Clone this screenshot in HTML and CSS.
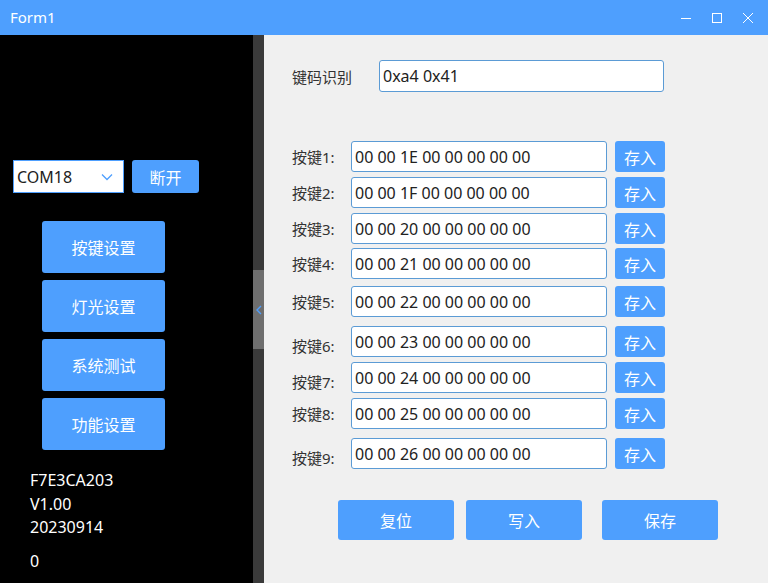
FILE: index.html
```html
<!DOCTYPE html>
<html lang="zh">
<head>
    <meta charset="UTF-8">
    <title>Form1</title>
    <link rel="stylesheet" href="styles.css">
</head>
<body>

<div class="window">
    <!-- 标题栏 -->
    <div class="titlebar">
        <span class="title">Form1</span>
        <div class="win-btns">
            <svg width="12" height="12" viewBox="0 0 12 12"><path d="M1 6.5h10" stroke="#fff" stroke-width="1"/></svg>
            <svg width="12" height="12" viewBox="0 0 12 12"><rect x="1.5" y="1.5" width="9" height="9" fill="none" stroke="#fff" stroke-width="1"/></svg>
            <svg width="12" height="12" viewBox="0 0 12 12"><path d="M1 1l10 10M11 1L1 11" stroke="#fff" stroke-width="1"/></svg>
        </div>
    </div>

    <div class="main">
        <!-- 左侧面板 -->
        <div class="side">
            <div class="port-row">
                <div class="select">
                    <span>COM18</span>
                    <svg width="12" height="8" viewBox="0 0 12 8"><path d="M1 1.5l5 5 5-5" fill="none" stroke="#4e9ffe" stroke-width="1.3"/></svg>
                </div>
                <button class="btn btn-small">断开</button>
            </div>
            <div class="menu">
                <button class="btn menu-btn">按键设置</button>
                <button class="btn menu-btn">灯光设置</button>
                <button class="btn menu-btn">系统测试</button>
                <button class="btn menu-btn">功能设置</button>
            </div>
            <div class="info">
                <div>F7E3CA203</div>
                <div>V1.00</div>
                <div>20230914</div>
                <div class="count">0</div>
            </div>
        </div>

        <!-- 分隔条 -->
        <div class="splitter">
            <div class="handle">
                <svg width="6" height="10" viewBox="0 0 6 10"><path d="M5 1L1 5l4 4" fill="none" stroke="#4e9ffe" stroke-width="1.4"/></svg>
            </div>
        </div>

        <!-- 右侧内容 -->
        <div class="content">
            <div class="code-row">
                <label>键码识别</label>
                <input class="field code-field" value="0xa4 0x41">
            </div>

            <div class="keys">
                <div class="key-row"><label>按键1:</label><input class="field" value="00 00 1E 00 00 00 00 00"><button class="btn save-btn">存入</button></div>
                <div class="key-row"><label>按键2:</label><input class="field" value="00 00 1F 00 00 00 00 00"><button class="btn save-btn">存入</button></div>
                <div class="key-row"><label>按键3:</label><input class="field" value="00 00 20 00 00 00 00 00"><button class="btn save-btn">存入</button></div>
                <div class="key-row tight"><label>按键4:</label><input class="field" value="00 00 21 00 00 00 00 00"><button class="btn save-btn">存入</button></div>
                <div class="key-row gap2"><label>按键5:</label><input class="field" value="00 00 22 00 00 00 00 00"><button class="btn save-btn">存入</button></div>
                <div class="key-row gap4 low"><label>按键6:</label><input class="field" value="00 00 23 00 00 00 00 00"><button class="btn save-btn">存入</button></div>
                <div class="key-row low"><label>按键7:</label><input class="field" value="00 00 24 00 00 00 00 00"><button class="btn save-btn">存入</button></div>
                <div class="key-row"><label>按键8:</label><input class="field" value="00 00 25 00 00 00 00 00"><button class="btn save-btn">存入</button></div>
                <div class="key-row gap4 low"><label>按键9:</label><input class="field" value="00 00 26 00 00 00 00 00"><button class="btn save-btn">存入</button></div>
            </div>

            <div class="actions">
                <button class="btn action-btn">复位</button>
                <button class="btn action-btn">写入</button>
                <button class="btn action-btn act-save">保存</button>
            </div>
        </div>
    </div>
</div>

</body>
</html>
```

FILE: styles.css
```css
* {
    box-sizing: border-box;
}

body {
    margin: 0;
    padding: 0;
    font-family: "Noto Sans", "Noto Sans CJK SC", sans-serif;
    background: #f0f0f0;
}

.window {
    width: 768px;
    height: 583px;
    display: flex;
    flex-direction: column;
    overflow: hidden;
}

.titlebar {
    height: 35px;
    background-color: #4e9ffe;
    color: white;
    display: flex;
    align-items: center;
    justify-content: space-between;
    padding: 0 14px 0 10px;
    flex-shrink: 0;
}

.title {
    font-size: 15px;
    margin-top: -1px;
}

.win-btns {
    display: flex;
    gap: 19px;
    align-items: center;
}

.main {
    flex: 1;
    display: flex;
}

.btn {
    font-family: "Noto Sans CJK SC", sans-serif;
    background-color: #4e9ffe;
    color: white;
    border: none;
    border-radius: 3px;
    padding: 0;
    cursor: pointer;
}

/* 左侧 */
.side {
    width: 253px;
    background: #000;
    color: white;
    padding: 125px 0 0 13px;
    display: flex;
    flex-direction: column;
}

.port-row {
    display: flex;
    gap: 8px;
}

.select {
    width: 111px;
    height: 33px;
    background: white;
    border: 1px solid #4e9ffe;
    color: #222;
    font-size: 16px;
    display: flex;
    align-items: center;
    justify-content: space-between;
    padding: 0 10px 0 3px;
}

.btn-small {
    width: 67px;
    height: 33px;
    font-size: 16px;
}

.menu {
    display: flex;
    flex-direction: column;
    gap: 7px;
    margin: 28px 0 0 29px;
}

.menu-btn {
    width: 123px;
    height: 52px;
    font-size: 16px;
}

.info {
    margin: 19px 0 0 17px;
    font-size: 16px;
    line-height: 23.5px;
}

.info .count {
    margin-top: 10px;
}

/* 分隔条 */
.splitter {
    width: 11px;
    background: #3a3a3a;
    display: flex;
    flex-direction: column;
    justify-content: flex-start;
}

.handle {
    margin-top: 235px;
    height: 79px;
    background: #6e6e6e;
    display: flex;
    align-items: center;
    justify-content: center;
}

/* 右侧 */
.content {
    flex: 1;
    background: #f0f0f0;
    padding: 25px 0 0 28px;
    color: #333;
}

.field {
    font-family: "Noto Sans", "Noto Sans CJK SC", sans-serif;
    font-size: 16px;
    color: #222;
    background: white;
    border: 1px solid #5b9bd5;
    border-radius: 3px;
    padding: 0 3px;
    outline: none;
}

.code-row {
    display: flex;
    align-items: center;
    height: 32px;
}

.code-row label {
    width: 87px;
    font-size: 15px;
}

.code-field {
    width: 285px;
    height: 32px;
}

.keys {
    margin-top: 49px;
    display: flex;
    flex-direction: column;
}

.key-row {
    display: flex;
    align-items: center;
    height: 31px;
    margin-bottom: 5px;
}

.key-row label {
    width: 59px;
    font-size: 15px;
}

.key-row.low label {
    margin-top: 8px;
}

.key-row.tight {
    margin-top: -1px;
}

.key-row.gap2 {
    margin-top: 2px;
}

.key-row.gap4 {
    margin-top: 4px;
}

.key-row .field {
    width: 256px;
    height: 31px;
}

.save-btn {
    width: 50px;
    height: 31px;
    margin-left: 8px;
    font-size: 16px;
}

.actions {
    display: flex;
    margin: 26px 0 0 46px;
}

.action-btn {
    width: 116px;
    height: 40px;
    font-size: 16px;
    margin-right: 12px;
}

.act-save {
    margin-left: 8px;
}
```
